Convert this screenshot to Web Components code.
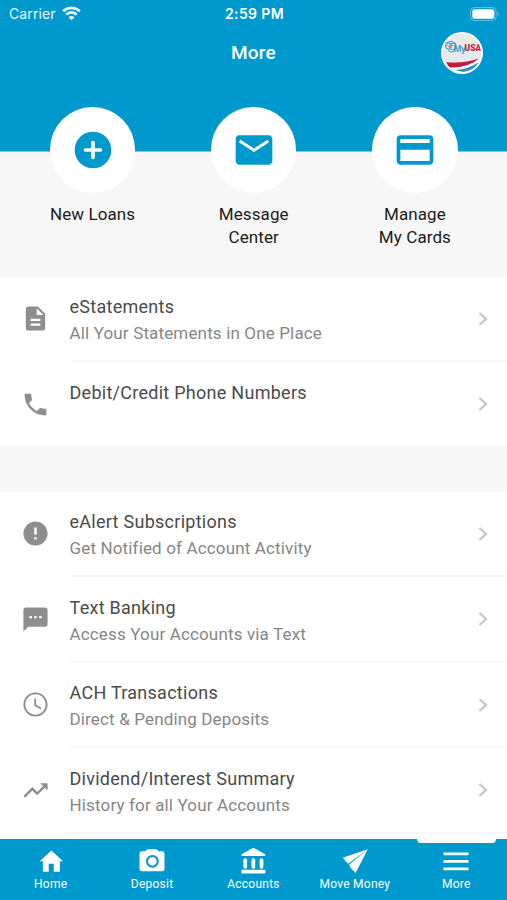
<!DOCTYPE html>
<html lang="en">
<head>
<meta charset="utf-8">
<title>More</title>
<style>
  body {
    margin: 0;
    background: #fff;
    font-family: Roboto, "Liberation Sans", sans-serif;
  }
</style>
</head>
<body>
<more-screen></more-screen>

<script>
const ICONS = {
  plus: `<circle cx="12" cy="12" r="10"/><path d="M12 7.900v8.200M7.900 12h8.200" stroke="#fff" stroke-width="2" stroke-linecap="round"/>`,
  mail: `<path d="M20 4H4c-1.100 0-1.990.9-1.990 2L2 18c0 1.100.9 2 2 2h16c1.100 0 2-.9 2-2V6c0-1.100-.9-2-2-2z"/><path d="M4.200 7.100l7.800 5 7.800-5" fill="none" stroke="#fff" stroke-width="1.600"/>`,
  card: `<path d="M20 4H4c-1.110 0-2 .89-2 2v12c0 1.110.89 2 2 2h16c1.110 0 2-.89 2-2V6c0-1.110-.89-2-2-2zm0 14H4v-6.200h16V18zm0-9.800H4V6h16v2.200z"/>`,
  doc: `<path d="M14 2H6c-1.100 0-1.990.9-1.990 2L4 20c0 1.100.89 2 1.990 2H18c1.100 0 2-.9 2-2V8l-6-6zm2 16H8v-1.800h8V18zm0-4H8v-1.800h8V14zm-3-5V3.500L18.500 9H13z"/>`,
  phone: `<path d="M6.620 10.790c1.440 2.830 3.760 5.140 6.590 6.590l2.200-2.200c.27-.27.67-.36 1.020-.24 1.120.37 2.330.57 3.570.57.55 0 1 .45 1 1V20c0 .55-.45 1-1 1-9.390 0-17-7.610-17-17 0-.55.45-1 1-1h3.500c.55 0 1 .45 1 1 0 1.250.2 2.450.57 3.570.11.35.03.74-.25 1.020l-2.200 2.200z"/>`,
  alert: `<path d="M12 2C6.480 2 2 6.480 2 12s4.480 10 10 10 10-4.480 10-10S17.520 2 12 2zm1 15h-2v-2h2v2zm0-4h-2V7h2v6z"/>`,
  chat: `<path d="M20 2H4c-1.100 0-1.990.9-1.990 2L2 22l4-4h14c1.100 0 2-.9 2-2V4c0-1.100-.9-2-2-2zM9 11H7V9h2v2zm4 0h-2V9h2v2zm4 0h-2V9h2v2z"/>`,
  clock: `<path d="M11.990 2C6.470 2 2 6.480 2 12s4.470 10 9.990 10C17.520 22 22 17.520 22 12S17.520 2 11.990 2zM12 20.400c-4.640 0-8.400-3.760-8.400-8.400S7.360 3.600 12 3.600s8.400 3.760 8.400 8.400-3.760 8.400-8.400 8.400zm.5-13.400H11v6l5.250 3.150.75-1.230-4.500-2.670z"/>`,
  trend: `<path d="M16 6l2.290 2.290-4.880 4.880-4-4L2 16.590 3.410 18l6-6 4 4 6.300-6.290L22 12V6z"/>`,
  home: `<path d="M10.200 20.500v-6.400h4v6.400h4.900v-8.300h2.500L12.300 3.500 3 12.200h2.500v8.300z"/>`,
  camera: `<path d="M20 4.200h-2.600L16.300 3A2 2 0 0 0 15 2.500H9a2 2 0 0 0-1.300.5L6.600 4.200H4a2 2 0 0 0-2 2v12a2 2 0 0 0 2 2h16a2 2 0 0 0 2-2v-12a2 2 0 0 0-2-2z"/><circle cx="12.300" cy="12.200" r="4.300" fill="none" stroke="#0099cd" stroke-width="1.600"/>`,
  bank: `<path d="M12.300 1.400L2.900 6.600V8h18.800V6.600z"/><path d="M5.800 11.200v5.400M12.300 11.200v5.400M18.800 11.200v5.400" stroke="currentColor" stroke-width="3" stroke-linecap="round"/><rect x="2.700" y="19" width="19.200" height="2.900" rx=".8"/>`,
  send: `<path d="M22.200 2.600L2.200 9.400l4.300 4.700zM22.200 2.600L7.200 15l1.600 2.800 3.700 3.800z"/>`,
  menu: `<path d="M2 6.300h20M2 12.300h20M2 18.300h20" stroke="currentColor" stroke-width="2.300"/>`
};

class AppIcon extends HTMLElement {
  connectedCallback() {
    const size = this.getAttribute("size");
    this.attachShadow({ mode: "open" }).innerHTML = `
      <style>
        :host { display: block; flex: none; width: ${size}px; height: ${size}px; }
        svg { display: block; width: 100%; height: 100%; fill: currentColor; }
      </style>
      <svg viewBox="0 0 24 24">${ICONS[this.getAttribute("name")]}</svg>
    `;
  }
}

class StatusBar extends HTMLElement {
  connectedCallback() {
    this.attachShadow({ mode: "open" }).innerHTML = `
      <style>
        :host {
          display: grid;
          grid-template-columns: 1fr auto 1fr;
          align-items: center;
          height: 27px;
          padding: 0 7px 0 9px;
          color: #fff;
          font-family: Inter, Roboto, sans-serif;
          font-size: 14px;
        }
        .carrier { display: flex; align-items: center; gap: 6px; opacity: .93; letter-spacing: .1px; }
        .time { font-weight: 600; font-size: 14px; letter-spacing: .4px; }
        .battery { justify-self: end; }
        svg { display: block; }
      </style>
      <div class="carrier">
        <span>Carrier</span>
        <svg width="19" height="15" viewBox="0 0 19 15" fill="none" stroke="#fff" stroke-width="2.700">
          <path d="M1.200 5.300a11.800 11.800 0 0 1 16.600 0M4.200 8.600a7.600 7.600 0 0 1 10.600 0"/>
          <path d="M9.500 14.200l3-3a4.200 4.200 0 0 0-6 0z" fill="#fff" stroke="none"/>
        </svg>
      </div>
      <span class="time">2:59 PM</span>
      <svg class="battery" width="30" height="14" viewBox="0 0 30 14">
        <rect x=".6" y=".6" width="25.500" height="12.800" rx="3.600" fill="none" stroke="#fff" stroke-opacity=".4"/>
        <rect x="2.300" y="2.300" width="22" height="9.400" rx="2" fill="#fff"/>
        <path d="M27.600 4.700q2 2.300 0 4.600z" fill="#fff" fill-opacity=".5"/>
      </svg>
    `;
  }
}

class BrandBadge extends HTMLElement {
  connectedCallback() {
    this.attachShadow({ mode: "open" }).innerHTML = `
      <style>
        :host { display: block; width: 42px; height: 42px; }
        svg { display: block; }
      </style>
      <svg width="42" height="42" viewBox="0 0 42 42">
        <defs><clipPath id="c"><circle cx="21" cy="21" r="19"/></clipPath></defs>
        <circle cx="21" cy="21" r="21" fill="#fff"/>
        <g clip-path="url(#c)">
          <rect width="42" height="42" fill="#e9e9eb"/>
          <path d="M3 29q17 5 36-3v16H3z" fill="#fff"/>
          <path d="M5 30q17 2 33-3.500Q28 36 8 35.500z" fill="#c9193c"/>
          <path d="M14 38q14-1 24-8l-3 7-9 4z" fill="#2d8fc4"/>
          <g fill="none" stroke="#3a91c5">
            <circle cx="7.500" cy="14" r="3"/><circle cx="12" cy="14.500" r="3.400"/>
            <path d="M4 12q6-5 11 0M7 18q4 4 7 0"/>
          </g>
          <path d="M6 13l3 2.500 3-2.500" stroke="#d66" fill="none"/>
          <text x="12.500" y="19.500" font-family="Roboto" font-weight="500" font-size="9" fill="#3a91c5">My</text>
          <text x="23.500" y="19" font-family="Roboto" font-weight="900" font-size="8.500" fill="#c9193c">USA</text>
        </g>
      </svg>
    `;
  }
}

class QuickAction extends HTMLElement {
  connectedCallback() {
    this.attachShadow({ mode: "open" }).innerHTML = `
      <style>
        :host { display: flex; flex-direction: column; align-items: center; }
        .circle {
          display: grid;
          place-items: center;
          width: 85.500px;
          height: 85.500px;
          border-radius: 50%;
          background: #fff;
          color: #0099cd;
        }
        .label {
          margin-top: 10.500px;
          font-size: 17px;
          line-height: 22.500px;
          letter-spacing: .1px;
          text-align: center;
          color: #1b1b1b;
        }
      </style>
      <div class="circle"><app-icon name="${this.getAttribute("icon")}" size="44"></app-icon></div>
      <div class="label"><slot></slot></div>
    `;
  }
}

class MenuRow extends HTMLElement {
  connectedCallback() {
    this.attachShadow({ mode: "open" }).innerHTML = `
      <style>
        :host { display: flex; height: 85.500px; background: #fff; }
        app-icon { margin: 27px 20px 0 20.500px; color: #8e8e8e; }
        .body {
          flex: 1;
          display: flex;
          justify-content: space-between;
          box-sizing: border-box;
          height: 85px;
          padding-right: 19px;
          border-bottom: 2px solid #f7f7f7;
        }
        :host([last]) .body { border-color: transparent; }
        .text { padding-top: 17px; white-space: nowrap; }
        .title {
          font-size: 18px;
          line-height: 26px;
          letter-spacing: .27px;
          color: #4a4a4a;
        }
        .note {
          font-size: 17px;
          line-height: 26px;
          letter-spacing: .15px;
          color: #868686;
        }
        .chevron { margin-top: 33.500px; }
      </style>
      <app-icon name="${this.getAttribute("icon")}" size="29"></app-icon>
      <div class="body">
        <div class="text">
          <div class="title"><slot></slot></div>
          <div class="note"><slot name="note"></slot></div>
        </div>
        <svg class="chevron" width="10" height="16" viewBox="0 0 10 16" fill="none" stroke="#c7c7c7" stroke-width="2.300">
          <path d="M1.500 2L8 8l-6.500 6"/>
        </svg>
      </div>
    `;
  }
}

class TabItem extends HTMLElement {
  connectedCallback() {
    this.attachShadow({ mode: "open" }).innerHTML = `
      <style>
        :host {
          position: relative;
          display: flex;
          flex-direction: column;
          align-items: center;
          padding-top: 7px;
          color: #fff;
          font-size: 12px;
          line-height: 16px;
          letter-spacing: .25px;
          white-space: nowrap;
        }
        :host([active])::before {
          content: "";
          position: absolute;
          top: -1px;
          width: 79px;
          height: 5px;
          border-radius: 0 0 4px 4px;
          background: #fff;
        }
      </style>
      <app-icon name="${this.getAttribute("icon")}" size="30"></app-icon>
      <div><slot></slot></div>
    `;
  }
}

class MoreScreen extends HTMLElement {
  connectedCallback() {
    this.attachShadow({ mode: "open" }).innerHTML = `
      <style>
        :host {
          display: grid;
          grid-template-rows: 277px 1fr 61px;
          height: 900px;
          overflow: hidden;
        }
        .top {
          background: linear-gradient(#0099cd 151px, #f7f7f7 152px);
        }
        .heading {
          display: grid;
          grid-template-columns: 1fr auto 1fr;
          align-items: center;
          height: 51px;
          padding: 0 24px;
          margin-bottom: 29px;
        }
        h1 {
          grid-column: 2;
          margin: 0;
          font-size: 19px;
          font-weight: 500;
          letter-spacing: .2px;
          color: #fff;
        }
        brand-badge { justify-self: end; }
        .actions {
          display: grid;
          grid-template-columns: repeat(3, 1fr);
          padding: 0 11.500px 0 12px;
        }
        .lists { overflow: hidden; min-height: 0; }
        .gap { height: 46px; background: #f7f7f7; margin-top: -2px; }
        .tabs {
          display: grid;
          grid-template-columns: repeat(5, 1fr);
          background: #0099cd;
        }
      </style>
      <div class="top">
        <status-bar></status-bar>
        <div class="heading"><h1>More</h1><brand-badge></brand-badge></div>
        <div class="actions">
          <quick-action icon="plus">New Loans</quick-action>
          <quick-action icon="mail">Message<br>Center</quick-action>
          <quick-action icon="card">Manage<br>My Cards</quick-action>
        </div>
      </div>
      <div class="lists">
        <menu-row icon="doc">eStatements<span slot="note">All Your Statements in One Place</span></menu-row>
        <menu-row icon="phone" last>Debit/Credit Phone Numbers</menu-row>
        <div class="gap"></div>
        <menu-row icon="alert">eAlert Subscriptions<span slot="note">Get Notified of Account Activity</span></menu-row>
        <menu-row icon="chat">Text Banking<span slot="note">Access Your Accounts via Text</span></menu-row>
        <menu-row icon="clock">ACH Transactions<span slot="note">Direct &amp; Pending Deposits</span></menu-row>
        <menu-row icon="trend">Dividend/Interest Summary<span slot="note">History for all Your Accounts</span></menu-row>
      </div>
      <div class="tabs">
        <tab-item icon="home">Home</tab-item>
        <tab-item icon="camera">Deposit</tab-item>
        <tab-item icon="bank">Accounts</tab-item>
        <tab-item icon="send">Move Money</tab-item>
        <tab-item icon="menu" active>More</tab-item>
      </div>
    `;
  }
}

customElements.define("app-icon", AppIcon);
customElements.define("status-bar", StatusBar);
customElements.define("brand-badge", BrandBadge);
customElements.define("quick-action", QuickAction);
customElements.define("menu-row", MenuRow);
customElements.define("tab-item", TabItem);
customElements.define("more-screen", MoreScreen);
</script>
</body>
</html>
